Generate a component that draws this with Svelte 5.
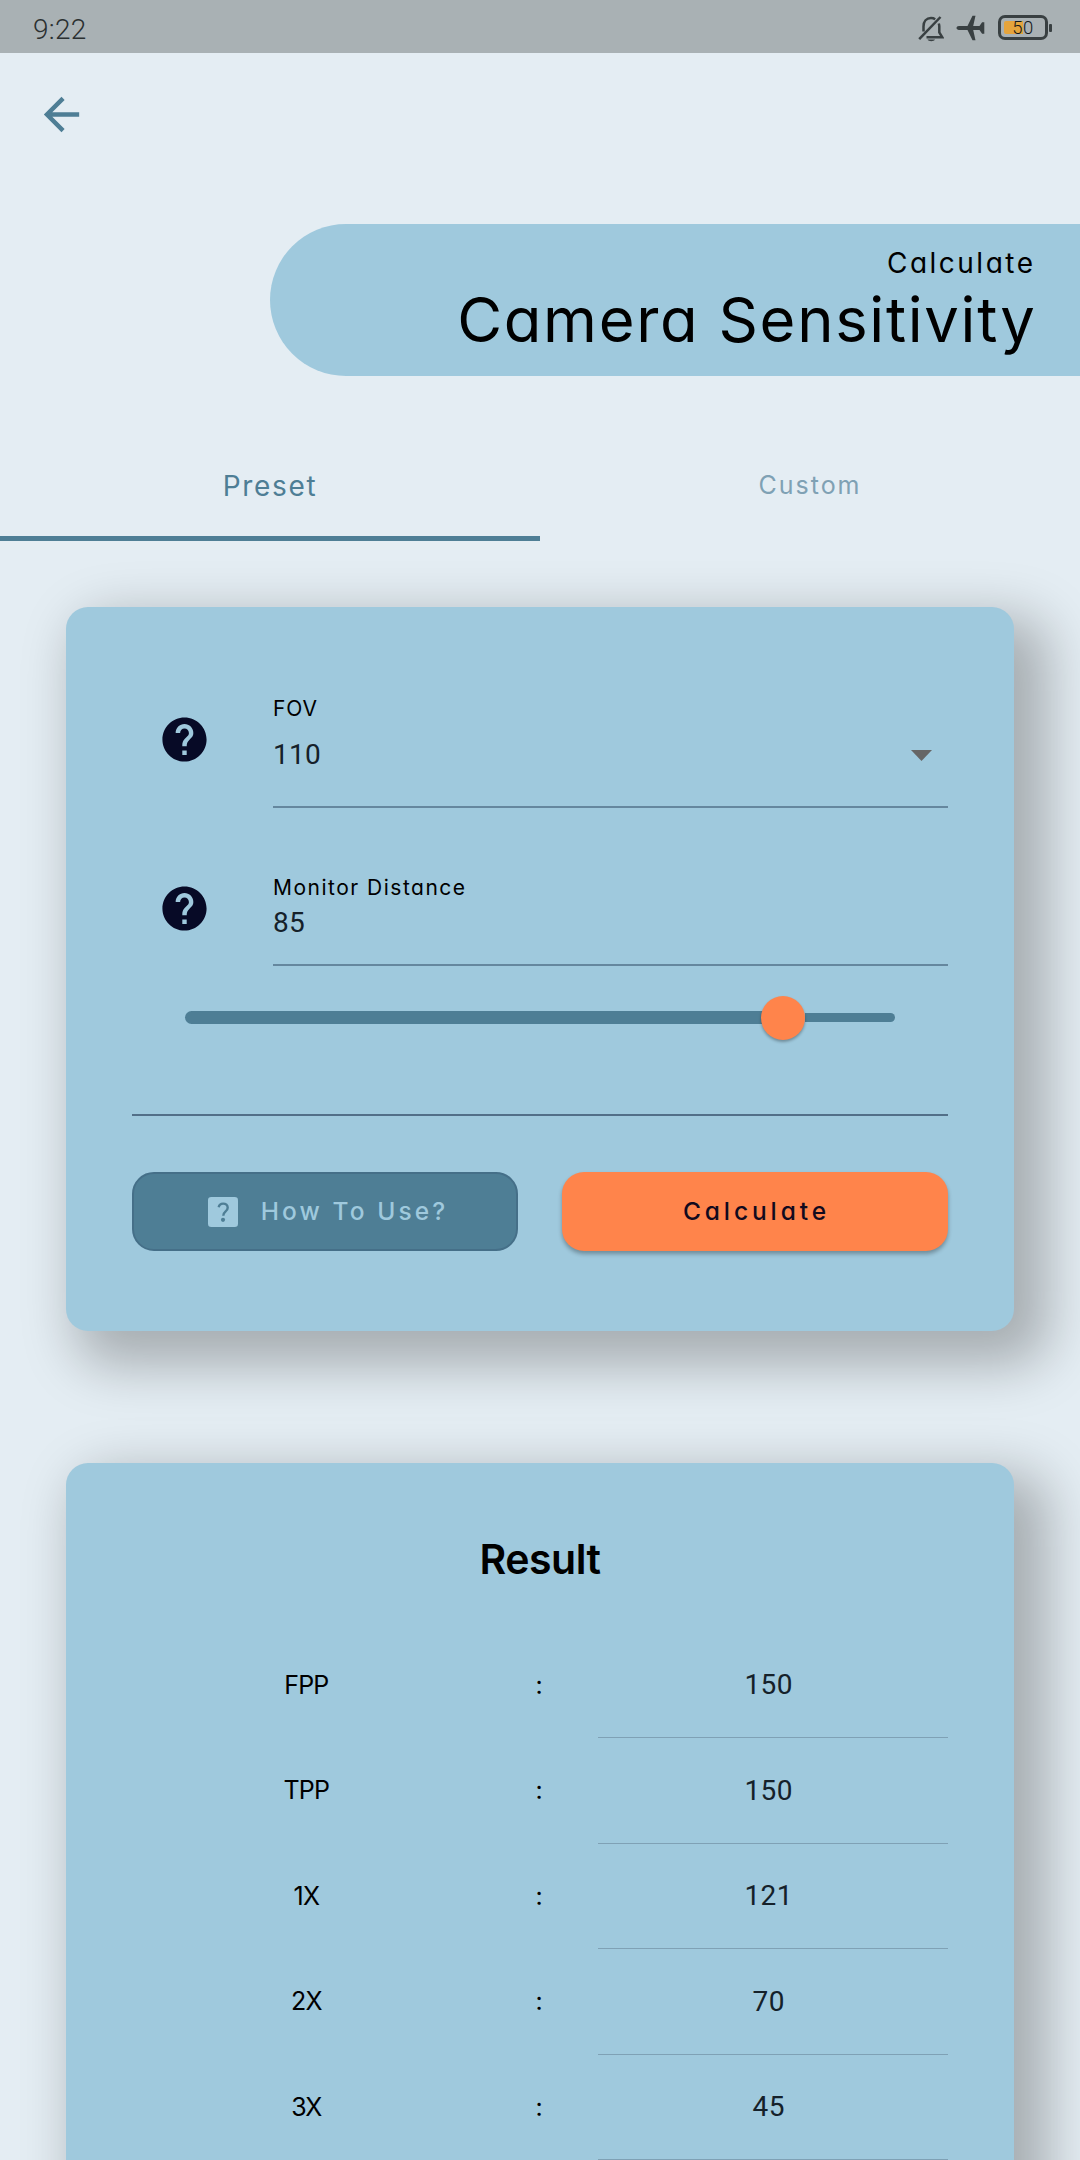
<script>
  const tabs = [
    { label: 'Preset', active: true },
    { label: 'Custom', active: false },
  ];
  const results = [
    { scope: 'FPP', value: 150 },
    { scope: 'TPP', value: 150 },
    { scope: '1X', value: 121 },
    { scope: '2X', value: 70 },
    { scope: '3X', value: 45 },
  ];
  const distance = 85;
  const sliderMin = 1;
  const sliderMax = 100;
  const percent = ((distance - sliderMin) / (sliderMax - sliderMin)) * 100 - 0.6;
</script>

{#snippet helpIcon()}
  <svg class="help" viewBox="0 0 24 24" aria-hidden="true">
    <path d="M12 2C6.48 2 2 6.48 2 12s4.48 10 10 10 10-4.48 10-10S17.52 2 12 2zm1 17h-2v-2h2v2zm2.07-7.75l-.9.92C13.45 12.9 13 13.5 13 15h-2v-.5c0-1.1.45-2.1 1.17-2.83l1.24-1.26c.37-.36.59-.86.59-1.41 0-1.1-.9-2-2-2s-2 .9-2 2H8c0-2.21 1.79-4 4-4s4 1.79 4 4c0 .88-.36 1.68-.93 2.25z" />
  </svg>
{/snippet}

<div class="screen">
  <div class="status">
    <span class="clock">9:22</span>
    <div class="indicators">
      <svg class="bell" viewBox="0 0 26 27" fill="none" stroke="#394042" aria-hidden="true">
        <path d="M5.5 16.5V11.5C5.5 6.5 8.5 3 13 3c1.600 0 3 .4 4.200 1.200M20.800 8.500c.3 1 .5 2 .5 3v6l3 4.800H8.500" stroke-width="2.500" />
        <path d="M1.200 24.200L22.500 2" stroke-width="2.500" />
        <path d="M9.500 24.500h7.500c-.9 2.200-6.600 2.200-7.500 0z" fill="#394042" stroke="none" />
      </svg>
      <svg class="plane" viewBox="0 0 29 26" fill="#394042" aria-hidden="true">
        <path d="M.5 13c0-1.100 1-1.900 2.500-1.900h8.500L16.500 .8h3l-2.300 10.300h6.300l2.600-3.800h2.200v11.400h-2.200l-2.600-3.800h-6.300l2.300 10.300h-3L11.500 14.900H3C1.500 14.900 .5 14.100 .5 13z" />
      </svg>
      <div class="battery">
        <div class="cell"><span class="charge"></span><span class="level">50</span></div>
        <span class="nub"></span>
      </div>
    </div>
  </div>

  <div class="appbar">
    <svg class="back" viewBox="0 0 24 24" aria-hidden="true">
      <path d="M20 11H7.830l5.590-5.590L12 4l-8 8 8 8 1.410-1.410L7.830 13H20v-2z" />
    </svg>
  </div>

  <header class="banner">
    <div class="kicker"><span>Calculate</span></div>
    <h1><span>Camera Sensitivity</span></h1>
  </header>

  <nav class="tabs">
    {#each tabs as tab}
      <div class="tab" class:active={tab.active}><span>{tab.label}</span></div>
    {/each}
  </nav>

  <main>
    <section class="card form">
      <div class="field fov">
        {@render helpIcon()}
        <div class="input">
          <span class="label l-fov">FOV</span>
          <div class="select">
            <span class="value">110</span>
            <svg class="caret" viewBox="0 0 21 11" aria-hidden="true"><path d="M0 0h21L10.500 11z" /></svg>
          </div>
        </div>
      </div>
      <div class="field distance">
        {@render helpIcon()}
        <div class="input">
          <span class="label l-dist">Monitor Distance</span>
          <span class="value">{distance}</span>
        </div>
      </div>
      <div class="slider">
        <div class="track-active" style:width="{percent}%"></div>
        <div class="thumb"></div>
        <div class="track-rest"></div>
      </div>
      <hr />
      <div class="actions">
        <button class="how">
          <svg viewBox="0 0 30 30" aria-hidden="true">
            <rect width="30" height="30" rx="3.300" fill="#9fc9dd" />
            <path d="M10.700 10.200c.4-2.200 2.100-3.600 4.400-3.600 2.700 0 4.600 1.700 4.600 4.100 0 1.900-1 2.900-2.300 4-1.400 1.200-2.100 2-2.100 4" fill="none" stroke="#4e7e95" stroke-width="2.400" />
            <circle cx="15" cy="22.800" r="2.100" fill="#4e7e95" />
          </svg>
          <span>How To Use?</span>
        </button>
        <button class="calc"><span>Calculate</span></button>
      </div>
    </section>

    <section class="card results">
      <h2><span>Result</span></h2>
      {#each results as row}
        <div class="row">
          <span class="scope"><b>{row.scope}</b></span>
          <span class="colon">:</span>
          <span class="number">{row.value}</span>
        </div>
      {/each}
    </section>
  </main>
</div>

<style>
  :global(body) {
    background: #e4edf3;
  }
  .screen {
    width: 1080px;
    height: 2160px;
    overflow: hidden;
    background: #e4edf3;
    color: #000;
    font-family: Inter, 'Liberation Sans', sans-serif;
    font-feature-settings: 'cv11';
    display: flex;
    flex-direction: column;
  }
  .status {
    box-sizing: border-box;
    flex: none;
    height: 53px;
    padding: 0 28px 0 33px;
    background: #a9b1b4;
    display: flex;
    justify-content: space-between;
    color: #2b3031;
    font-family: Roboto, sans-serif;
  }
  .clock {
    font-size: 28px;
    font-weight: 300;
    line-height: 59px;
    letter-spacing: 0.300px;
  }
  .indicators {
    display: flex;
    align-items: flex-start;
    padding-top: 15px;
  }
  .bell {
    width: 26px;
    height: 27px;
    margin-right: 12px;
  }
  .plane {
    width: 29px;
    height: 26px;
    margin-right: 13px;
  }
  .battery {
    display: flex;
    align-items: center;
    gap: 1px;
  }
  .cell {
    box-sizing: border-box;
    width: 50px;
    height: 25px;
    border: 3px solid #394042;
    border-radius: 7px;
    padding: 3px;
    display: grid;
  }
  .charge,
  .level {
    grid-area: 1 / 1;
  }
  .charge {
    width: 19px;
    height: 13px;
    border-radius: 2px 0 0 2px;
    background: #e5a43c;
  }
  .level {
    font-size: 18.500px;
    line-height: 14px;
    text-align: center;
    font-weight: 300;
    letter-spacing: 0.500px;
    color: #14181a;
  }
  .nub {
    width: 3px;
    height: 8px;
    border-radius: 1px;
    background: #394042;
  }
  .appbar {
    flex: none;
    height: 171px;
    padding: 35px 0 0 35px;
    box-sizing: border-box;
  }
  .back {
    display: block;
    width: 53px;
    height: 53px;
    fill: #4e7e95;
  }
  .banner {
    box-sizing: border-box;
    flex: none;
    margin-left: 270px;
    height: 151.500px;
    padding: 20px 43.500px 0 0;
    border-radius: 76px 0 0 76px;
    background: #9fc9dd;
    text-align: right;
  }
  .kicker {
    padding-right: 1px;
    font-size: 28px;
    line-height: 38px;
    letter-spacing: 2.500px;
  }
  h1 {
    margin: 0;
    font-size: 61.500px;
    font-weight: 400;
    line-height: 75px;
    letter-spacing: 1.700px;
  }
  .tabs {
    flex: none;
    height: 165.500px;
    display: flex;
    align-items: flex-end;
  }
  .tab {
    box-sizing: border-box;
    flex: 1;
    height: 105px;
    padding-top: 32px;
    text-align: center;
    font-size: 25px;
    line-height: 34px;
    letter-spacing: 2px;
    color: #7fa1b4;
  }
  .tab.active {
    font-size: 28px;
    border-bottom: 5px solid #4e7e95;
    color: #4e7e95;
    padding-top: 33px;
    letter-spacing: 1.700px;
  }
  main {
    flex: none;
    display: flex;
    flex-direction: column;
    gap: 132px;
    padding: 66px 66px 0;
  }
  .card {
    box-sizing: border-box;
    border-radius: 22px;
    background: #9fc9dd;
    padding: 0 66px;
    box-shadow: 22px 22px 53px 12px rgba(0, 0, 0, 0.27);
  }
  .form {
    height: 724px;
  }
  .results {
    height: 760px;
  }
  .field {
    display: flex;
    align-items: flex-start;
  }
  .help {
    flex: none;
    width: 53px;
    height: 53px;
    fill: #070a26;
  }
  .input {
    box-sizing: border-box;
    flex: 1;
    display: flex;
    flex-direction: column;
    border-bottom: 2px solid #65879e;
  }
  .label {
    font-size: 21px;
    line-height: 28px;
  }
  .l-fov {
    letter-spacing: 0.900px;
  }
  .l-dist {
    letter-spacing: 1.500px;
  }
  .value,
  .number {
    font-family: Roboto, sans-serif;
    font-size: 28px;
    line-height: 36px;
    letter-spacing: 0.300px;
    color: #15212a;
  }
  .fov {
    padding-top: 88px;
  }
  .fov .input {
    height: 113px;
  }
  .fov .help {
    margin: 18px 61.700px 0 26.300px;
  }
  .select {
    display: flex;
    align-items: center;
    justify-content: space-between;
    padding: 14px 16px 0 0;
  }
  .caret {
    width: 21px;
    height: 11px;
    fill: #666;
    margin-top: 1px;
  }
  .distance {
    padding-top: 66px;
  }
  .distance .input {
    height: 92px;
  }
  .distance .help {
    margin: 8px 61.700px 0 26.300px;
  }
  .distance .value {
    margin-top: 3px;
  }
  .slider {
    display: flex;
    align-items: center;
    height: 44px;
    margin: 29.500px 53px 0;
  }
  .track-active {
    height: 13px;
    margin-right: -22px;
    border-radius: 7px 0 0 7px;
    background: #4e7e95;
  }
  .thumb {
    flex: none;
    width: 44px;
    height: 44px;
    border-radius: 50%;
    background: #ff844b;
    box-shadow: 0 2px 3px rgba(0, 0, 0, 0.3);
    z-index: 1;
  }
  .track-rest {
    flex: 1;
    height: 9px;
    border-radius: 0 5px 5px 0;
    background: #4e7e95;
  }
  hr {
    height: 2px;
    margin: 74.500px 0 56px;
    border: 0;
    background: #526f88;
  }
  .actions {
    display: grid;
    grid-template-columns: 1fr 1fr;
    gap: 44px;
  }
  button {
    box-sizing: border-box;
    height: 79px;
    border: 0;
    border-radius: 22px;
    padding: 0 0 1px;
    display: flex;
    align-items: center;
    justify-content: center;
    font: 500 24.500px/34px Inter, 'Liberation Sans', sans-serif;
    font-feature-settings: 'cv11';
    letter-spacing: 3.100px;
  }
  .how {
    background: #4e7e95;
    border: 2px solid #456f88;
    color: #9fc9dd;
    gap: 23px;
    padding-left: 6px;
  }
  .how svg {
    width: 30px;
    height: 30px;
    margin-top: 1px;
  }
  .calc {
    background: #ff844b;
    color: #120a1e;
    box-shadow: 0 3px 4px rgba(0, 0, 0, 0.3);
    letter-spacing: 3.900px;
    padding-left: 3px;
  }
  button span {
    margin-top: -1px;
  }
  h2 {
    margin: 0;
    padding-top: 71px;
    font-size: 41px;
    line-height: 50px;
    font-weight: 600;
    text-align: center;
    letter-spacing: -0.500px;
  }
  .row {
    display: grid;
    grid-template-columns: 3fr 1fr 3fr;
    align-items: end;
    height: 105.500px;
    text-align: center;
    font-size: 25px;
  }
  h2 + .row {
    margin-top: 48.500px;
  }
  .scope,
  .colon {
    line-height: 34px;
    padding-bottom: 36.500px;
  }
  .scope {
    letter-spacing: -0.800px;
    padding-right: 1px;
  }
  .colon {
    padding-right: 2px;
  }
  .scope b {
    font-weight: 400;
  }
  .number {
    padding: 0 9px 34px 0;
    border-bottom: 1px solid #7fa1b5;
  }
</style>
